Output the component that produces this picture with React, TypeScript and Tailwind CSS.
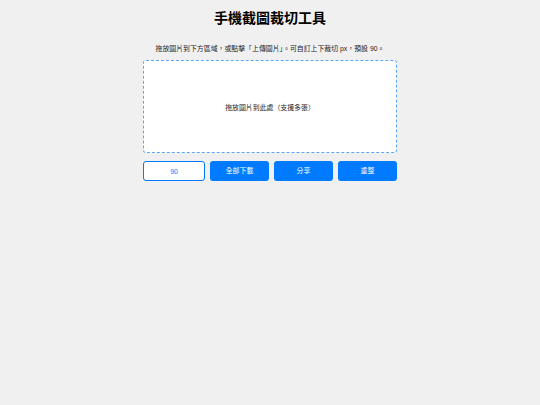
export default function App() {
  return (
    <div
      className="min-h-screen w-full bg-[#f0f0f0] text-[#222]"
      style={{ fontFamily: '"Liberation Sans", "Noto Sans CJK TC", sans-serif' }}
    >
      <div className="mx-auto flex w-[254px] flex-col items-center pt-[8px]">
        <h1 className="text-[14px] leading-[21px] font-bold text-black">手機截圖裁切工具</h1>

        <p className="mt-[15px] text-[6.9px] leading-[10px] whitespace-nowrap">
          拖放圖片到下方區域，或點擊「上傳圖片」。可自訂上下裁切 px，預設 90。
        </p>

        {/* drop area */}
        <div className="mt-[6px] flex h-[93px] w-full items-center justify-center rounded-[3px] border border-dashed border-[#5aa5f5] bg-white pt-[3px]">
          <span className="text-[6.9px]">拖放圖片到此處（支援多張）</span>
        </div>

        <div className="mt-[8px] flex w-full gap-[5px]">
          <input
            defaultValue="90"
            className="h-[20px] w-[62px] rounded-[3px] border border-[#007bff] bg-white text-center text-[6.9px] text-[#007bff] outline-none"
          />
          <button className="h-[20px] flex-1 rounded-[3px] bg-[#007bff] text-[6.9px] text-white">全部下載</button>
          <button className="h-[20px] flex-1 rounded-[3px] bg-[#007bff] text-[6.9px] text-white">分享</button>
          <button className="h-[20px] flex-1 rounded-[3px] bg-[#007bff] text-[6.9px] text-white">重整</button>
        </div>
      </div>
    </div>
  );
}
